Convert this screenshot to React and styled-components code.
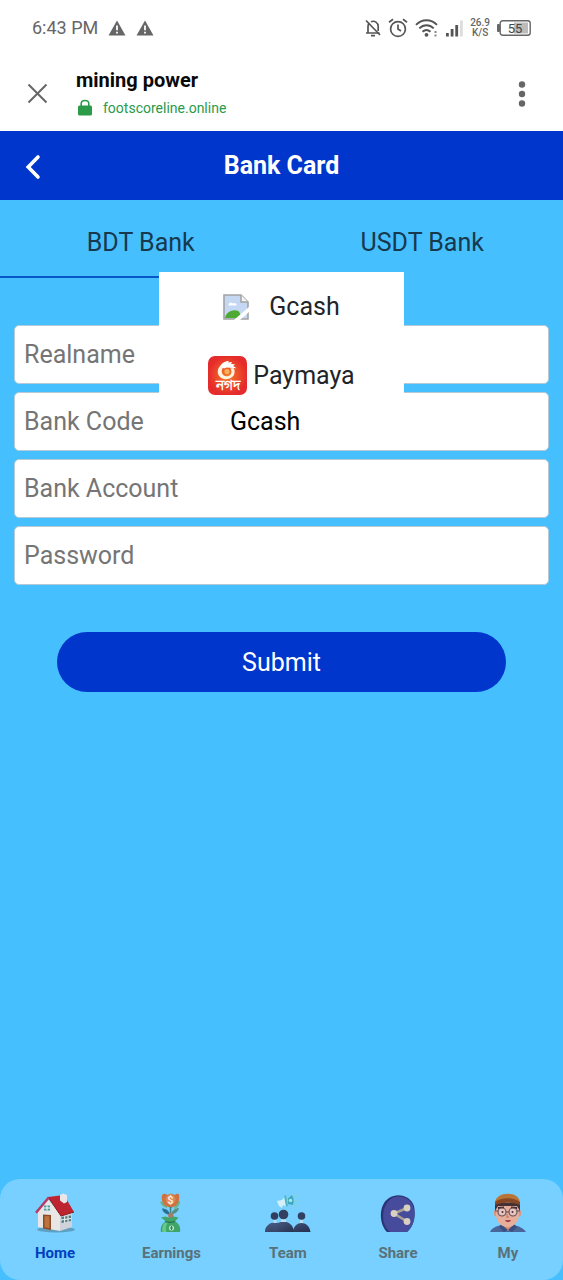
import React, { useState } from "react";
import styled, { createGlobalStyle } from "styled-components";

const GlobalStyle = createGlobalStyle`
  * {
    box-sizing: border-box;
  }

  body {
    margin: 0;
    background: #46bfff;
    font-family: Roboto, "Liberation Sans", sans-serif;
  }

  button,
  input {
    font-family: inherit;
  }

  button {
    border: 0;
    padding: 0;
    background: none;
    cursor: pointer;
  }

  svg {
    display: block;
    flex: none;
  }
`;

const Page = styled.div`
  display: flex;
  flex-direction: column;
  min-height: 100vh;
`;

const StatusBar = styled.div`
  display: flex;
  justify-content: space-between;
  align-items: center;
  height: 56px;
  padding: 0 32px;
  background: #fff;
  color: #666;
`;

const StatusGroup = styled.div`
  display: flex;
  align-items: center;
  gap: ${({ $gap }) => $gap}px;
`;

const Clock = styled.span`
  font-size: 18px;
  line-height: 20px;
`;

const NetSpeed = styled.span`
  font-size: 10px;
  font-weight: 500;
  line-height: 10px;
  text-align: center;
`;

const BrowserBar = styled.div`
  display: flex;
  align-items: center;
  height: 75px;
  padding: 0 32px 0 27px;
  background: #fff;
  color: #666;
`;

const SiteInfo = styled.div`
  flex: 1;
  margin-left: 28px;
`;

const SiteTitle = styled.div`
  color: #0a0a0a;
  font-size: 20px;
  font-weight: 700;
  line-height: 28px;
`;

const SiteUrl = styled.a`
  display: flex;
  align-items: center;
  gap: 11px;
  padding-left: 2px;
  color: #2b9a49;
  font-size: 14px;
  line-height: 28px;
  text-decoration: none;
`;

const Header = styled.header`
  display: grid;
  grid-template-columns: 64px 1fr 64px;
  align-items: center;
  height: 69px;
  background: #0036cc;
  color: #fff;

  & h1 {
    margin: 0;
    font-size: 25px;
    font-weight: 700;
    line-height: 32px;
    text-align: center;
  }
`;

const BackButton = styled.button`
  padding: 2px 0 0 25px;
  color: #fff;
`;

const Tabs = styled.div`
  display: grid;
  grid-template-columns: 1fr 1fr;
`;

const Tab = styled.button`
  height: 78px;
  padding-top: 8px;
  border-bottom: 2px solid ${({ $active }) => ($active ? "#0757c9" : "transparent")};
  color: #17384d;
  font-size: 25px;
`;

const Form = styled.form`
  display: flex;
  flex-direction: column;
  gap: 8px;
  padding: 47px 14px;
`;

const Field = styled.div`
  position: relative;
  display: flex;
  align-items: center;
  height: 59px;
  padding: 0 9px;
  border: 1px solid #b5c9d6;
  border-radius: 5px;
  background: #fff;
  color: #757575;
  font-size: 25px;

  & label {
    flex: 0 0 40%;
  }
`;

const TextInput = styled.input`
  width: 100%;
  min-width: 0;
  height: 56px;
  padding: 0;
  border: 0;
  outline: 0;
  background: none;
  color: #000;
  font-size: 25px;

  &::placeholder {
    color: #757575;
    opacity: 1;
  }
`;

const BankMenu = styled.div`
  position: absolute;
  bottom: 40px;
  left: 27%;
  width: 46%;
  background: #fff;
`;

const BankOption = styled.button`
  display: flex;
  justify-content: center;
  align-items: center;
  gap: ${({ $gap }) => $gap}px;
  width: 100%;
  height: 69px;
  color: #212529;
  font-size: 25px;
`;

const Submit = styled.button`
  align-self: center;
  width: 84%;
  height: 60px;
  margin-top: 39px;
  border-radius: 30px;
  background: #0036cc;
  color: #fff;
  font-size: 25px;
`;

const BottomNav = styled.nav`
  display: flex;
  justify-content: space-around;
  height: 101px;
  margin-top: auto;
  padding-top: 14px;
  border-radius: 20px;
  background: #77d0ff;
`;

const NavItem = styled.a`
  display: flex;
  flex-direction: column;
  align-items: center;
  gap: 10px;
  min-width: 46px;
  color: ${({ $active }) => ($active ? "#0040c0" : "#5a7078")};
  font-size: 15px;
  font-weight: 700;
  line-height: 20px;
  text-decoration: none;
`;

const WarningIcon = () => (
  <svg width="18" height="16" viewBox="0 0 18 16">
    <path d="M9 0.5 17.5 15.5H.5z" fill="#666" />
    <path d="M9 5.5v4.8M9 11.8v1.8" stroke="#fff" strokeWidth="1.8" />
  </svg>
);

const BellOffIcon = () => (
  <svg width="16" height="18" viewBox="0 0 16 18" fill="none" stroke="#555" strokeWidth="1.7">
    <path d="M1 14h13.5M3 14V7.500c0-1.500.5-2.700 1.400-3.500M6 2.800C9.600 1.200 13.200 3.600 13.200 7.500V12" />
    <path d="M1 1.500 15 16M6 16.700h4" />
  </svg>
);

const AlarmIcon = () => (
  <svg width="20" height="20" viewBox="0 0 20 20" fill="none" stroke="#555" strokeWidth="1.7">
    <circle cx="10" cy="11" r="7.4" />
    <path d="M10 6.500V11l3 2M1 4.200 5 1.200M19 4.200 15 1.200" />
  </svg>
);

const WifiIcon = () => (
  <svg width="24" height="20" viewBox="0 0 24 20" fill="none" stroke="#555" strokeWidth="1.9">
    <path d="M1 6.800C7 .700 16 .700 22 6.800M4.300 10.400c4.300-4.200 10.100-4.200 14.400 0M7.500 13.800c2.400-2.300 5.600-2.300 8 0" />
    <circle cx="11.5" cy="16.8" r="1.9" fill="#555" stroke="none" />
    <path d="M20.500 13v2M20.500 16.500v2" strokeWidth="2" stroke="#888" />
  </svg>
);

const SignalIcon = () => (
  <svg width="17" height="17" viewBox="0 0 17 17" fill="#555">
    <rect x="0" y="13" width="2.8" height="3.5" />
    <rect x="4.7" y="9" width="2.8" height="7.5" />
    <rect x="9.3" y="5" width="2.8" height="11.5" />
    <rect x="14" y="0.5" width="2.8" height="16" fill="#ddd" />
  </svg>
);

const BatteryIcon = () => (
  <svg width="34" height="18" viewBox="0 0 34 18">
    <rect x="0" y="5" width="3" height="8" rx="1" fill="#666" />
    <rect x="3.2" y="1.7" width="30" height="14.600" rx="2.5" fill="#fff" stroke="#666" strokeWidth="1.4" />
    <rect x="17" y="3.5" width="14" height="11" fill="#bbb" />
    <text x="18" y="14" fontSize="13" textAnchor="middle" fill="#444">55</text>
  </svg>
);

const CloseIcon = () => (
  <svg width="21" height="21" viewBox="0 0 21 21" stroke="#666" strokeWidth="2">
    <path d="M1.500 1.500 19.500 19.500M19.500 1.500 1.500 19.500" />
  </svg>
);

const LockIcon = () => (
  <svg width="14" height="17" viewBox="0 0 14 17">
    <path d="M3.200 7V4.700C3.200 .400 10.800 .400 10.800 4.700V7" fill="none" stroke="#2b9a49" strokeWidth="1.6" />
    <rect y="6.5" width="14" height="10" rx="1.5" fill="#2b9a49" />
  </svg>
);

const DotsIcon = () => (
  <svg width="18" height="28" viewBox="0 0 18 28" fill="#666">
    <circle cx="9" cy="4.500" r="3.2" />
    <circle cx="9" cy="14" r="3.2" />
    <circle cx="9" cy="23.500" r="3.2" />
  </svg>
);

const BackIcon = () => (
  <svg width="17" height="26" viewBox="0 0 17 26" fill="none" stroke="#fff" strokeWidth="3.6" strokeLinecap="round">
    <path d="M13 3 3.200 13 13 23" />
  </svg>
);

const BrokenImageIcon = () => (
  <svg width="26" height="26" viewBox="0 0 26 26">
    <path d="M1 1h17l7 7v17H1z" fill="#c5d8f3" stroke="#a3a3a3" strokeWidth="1.6" />
    <path d="M5.500 11.500c0-3 3-3.800 4-2 2-1.500 4.500 0 4 2z" fill="#fff" />
    <path d="M2 24c1-6.500 9-9.500 14-6.500l3 6.500z" fill="#4faa35" />
    <path d="M11 26 26 13v5l-9 8z" fill="#fff" />
    <path d="M18 1v7h7" fill="#f5f5f5" stroke="#a3a3a3" strokeWidth="1.5" />
  </svg>
);

const NagadIcon = () => (
  <svg width="39" height="39" viewBox="0 0 39 39">
    <defs>
      <radialGradient id="nagad">
        <stop offset="0" stopColor="#f57b28" />
        <stop offset="1" stopColor="#e52b2b" />
      </radialGradient>
    </defs>
    <rect width="39" height="39" rx="7" fill="url(#nagad)" />
    <path d="M12.500 9.500c-4 4-3.500 9.500.5 12.200 4.500 3 11.500 1.300 13.200-3.700.8-2.300.4-4.300-.7-6l-3.200.5c2 2.500 1.500 5.800-1.300 7.300-3 1.500-6.800-.3-7.200-3.800-.3-2.400.8-4.300 3-5.500z" fill="#fff4df" />
    <path d="M12.500 9.500c2-3 5-4.500 8.500-4.500l-1 1.500 4-.5-1 1.800 4 .7-1.800 1.500 3.300 2.300-10-.8-2.500 1z" fill="#fff" />
    <circle cx="19" cy="15.5" r="2.6" fill="#f9b05a" />
    <text x="19.5" y="33.5" fontSize="14" fontWeight="700" textAnchor="middle" fill="#fff">নগদ</text>
  </svg>
);

const HomeIcon = () => (
  <svg width="42" height="40" viewBox="0 0 42 40">
    <ellipse cx="22" cy="36.5" rx="19" ry="3" fill="#4f8199" opacity=".6" />
    <path d="M4 18 14 6l12 15v17L4 34z" fill="#e9e7e6" />
    <path d="m26 21 12-2v15l-12 4z" fill="#cfd2d8" />
    <path d="M14 4 30 2l10 17-13 4z" fill="#bd2430" />
    <path d="m14 4 13 19 13-4" fill="none" stroke="#8d1824" strokeWidth="1" />
    <path d="M1 19 14 3.500l1.500 2L3 20.500z" fill="#b43a68" />
    <path d="m26 2 3-1.500 4 1.500v7l-3 1.500-4-3z" fill="#e9e5e8" />
    <path d="M9 21.500 17 22v15l-8-1.500z" fill="#8b4c27" />
    <path d="m10.500 23 5 .3v12l-5-1z" fill="#bd733d" />
    <path d="M10 12.500h6v5h-6z" fill="#4c9c9f" />
    <path d="M13 12.500v5M10 15h6" stroke="#fff" strokeWidth="1" />
    <path d="m27.500 24 9.500-1.500v5.500l-9.500 2z" fill="#537b83" />
    <path d="M30.700 23v7M34 23v6M27 27l10-1.500" stroke="#f7f7f7" strokeWidth="1" />
  </svg>
);

const EarningsIcon = () => (
  <svg width="24" height="40" viewBox="0 0 24 40">
    <path d="M1 9c1 3 3 5 7 6V7zM21 8c0 4-2 7-6 8l1-8z" fill="#6db38b" />
    <path d="M3 2c2-2 4-1 5 0l4-1.500L16 2c2-2 4-1 4 0 1 5-1 9-4 11l-4 2-5-2C4 11 2 7 3 2z" fill="#cf7141" />
    <circle cx="11.5" cy="6.5" r="5" fill="#dd8858" />
    <text x="11.5" y="10.5" fontSize="11" fontWeight="700" textAnchor="middle" fill="#ffe8d7">$</text>
    <path d="M11.500 14v11" stroke="#3d7f80" strokeWidth="1.5" />
    <path d="M3 15.500c4 0 7 2 8 6-4 0-7-2-8-6z" fill="#286f91" />
    <path d="M20 15c-4 0-7 3-8 6 4 0 7-2 8-6z" fill="#568f80" />
    <path d="M9 21.500l2.500-2 3 2V25h-5z" fill="#a77b68" />
    <path d="M2 24.500l4.500-1 4 1.500 4-1.500 5 1-3.500 4c4 2 6 6 5 10.500H2c-1-4.500 1-8.500 5-10.500z" fill="#40a568" />
    <path d="M7 29c-4 3-4 6-3.500 10h4c-1-3-1-7 2-10z" fill="#65c98a" />
    <path d="M6 28.500c3 1 7 1 10 0" stroke="#25734f" strokeWidth="1.2" fill="none" />
    <circle cx="12.5" cy="35" r="2.6" fill="#b4e6c5" />
    <path d="M12.500 33v4M11 35h3" stroke="#2c8545" />
  </svg>
);

const TeamIcon = () => (
  <svg width="46" height="40" viewBox="0 0 46 40">
    <defs>
      <linearGradient id="suit" x1="0" y1="0" x2="1" y2="1">
        <stop offset="0" stopColor="#4c5f87" />
        <stop offset="1" stopColor="#25304f" />
      </linearGradient>
    </defs>
    <path d="M0 39c0-12 19-13 20 0zM28 39c1-12 16-12 17.500 0z" fill="url(#suit)" />
    <path d="M8 39c1-14 20-14 21 0z" fill="url(#suit)" />
    <path d="M16.500 26h4l1 3h-6zM8.500 27h3v3h-3zM35 27h3v3h-3z" fill="#b9deef" />
    <circle cx="9.5" cy="23" r="3.8" fill="#333f61" />
    <circle cx="18.5" cy="21.5" r="4.8" fill="#333f61" />
    <circle cx="36.5" cy="23" r="3.8" fill="#333f61" />
    <path d="m12 8 5-1 3-4 2 11-4-2-1 3-3-2z" fill="#d5eff8" />
    <path d="m19 3 2-1 2 11-2 1z" fill="#4fb7c9" />
    <path d="M23 5.500 27 2c2 3 2 7 1 10l-5-1z" fill="#3ea9be" />
    <circle cx="25.5" cy="7.5" r="1.8" fill="#a8e2e9" />
    <path d="m29 4 3-2M29.500 8h4M29 12l3 2" stroke="#83d4bd" strokeWidth="1.2" />
  </svg>
);

const ShareIcon = () => (
  <svg width="36" height="40" viewBox="0 0 36 40">
    <path d="M7 39C-2 30-1 11 9 5c9-6 22-2 25 8 2 10 0 20-7 26z" fill="#293575" />
    <path d="M10 39C0 31 1 12 12 5c9-4 18 0 21 8 3 10 1 20-6 26z" fill="#474b9b" />
    <path d="M27 15 14 20.500l13 8" fill="none" stroke="#aaa091" strokeWidth="2.6" />
    <circle cx="27" cy="15" r="3.4" fill="#d8d0c0" />
    <circle cx="14" cy="20.5" r="3.4" fill="#d8d0c0" />
    <circle cx="27" cy="28.5" r="3.4" fill="#d8d0c0" />
  </svg>
);

const ProfileIcon = () => (
  <svg width="36" height="40" viewBox="0 0 36 40">
    <path d="M0 39c2-4 6-6 12-7h11c6 1 10 3 13 7z" fill="#4a659a" />
    <path d="M12 28h11v6l-5 4-6-4z" fill="#d88d78" />
    <path d="m11 31 7 6-4 2-5-5zM24 31l-6 6 4 2 5-5z" fill="#384f80" />
    <ellipse cx="6" cy="20" rx="2" ry="3.500" fill="#dc947b" />
    <ellipse cx="29" cy="20" rx="2" ry="3.500" fill="#dc947b" />
    <path d="M6 10h23v11c0 8-5 13-11.500 13S6 29 6 21z" fill="#e8ae9c" />
    <path d="M5 10h25v8l-3-5H8l-3 5z" fill="#443136" />
    <path d="M5 11C4-2 31-3 30 11c-7-4-17-4-25 0z" fill="#b97438" />
    <path d="M5 9c6-5 19-5 25 0v3c-8-3-17-3-25 0z" fill="#884825" />
    <path d="M8 15l6-.5M21 14.500l6 .5" stroke="#3d2932" strokeWidth="1.8" />
    <circle cx="12" cy="19" r="4" fill="#eac5bd" stroke="#604c56" strokeWidth="1.1" />
    <circle cx="23" cy="19" r="4" fill="#eac5bd" stroke="#604c56" strokeWidth="1.1" />
    <path d="M16 19h3M5 18h3M27 18h3" stroke="#604c56" />
    <circle cx="12.5" cy="19" r="1" fill="#43343b" />
    <circle cx="22.5" cy="19" r="1" fill="#43343b" />
    <path d="M17 21v3h2" fill="none" stroke="#ca7c69" strokeWidth="1.3" />
    <path d="M15 27h6c-1 3-5 3-6 0z" fill="#a54348" />
  </svg>
);

const navItems = [
  { label: "Home", Icon: HomeIcon },
  { label: "Earnings", Icon: EarningsIcon },
  { label: "Team", Icon: TeamIcon },
  { label: "Share", Icon: ShareIcon },
  { label: "My", Icon: ProfileIcon },
];

const App = () => {
  const [tab, setTab] = useState("BDT Bank");
  const [bank, setBank] = useState("Gcash");

  return (
    <Page>
      <GlobalStyle />
      <StatusBar>
        <StatusGroup $gap={10}>
          <Clock>6:43 PM</Clock>
          <WarningIcon />
          <WarningIcon />
        </StatusGroup>
        <StatusGroup $gap={7}>
          <BellOffIcon />
          <AlarmIcon />
          <WifiIcon />
          <SignalIcon />
          <NetSpeed>26.9<br />K/S</NetSpeed>
          <BatteryIcon />
        </StatusGroup>
      </StatusBar>
      <BrowserBar>
        <button type="button" aria-label="Close"><CloseIcon /></button>
        <SiteInfo>
          <SiteTitle>mining power</SiteTitle>
          <SiteUrl href="#"><LockIcon />footscoreline.online</SiteUrl>
        </SiteInfo>
        <button type="button" aria-label="More"><DotsIcon /></button>
      </BrowserBar>
      <Header>
        <BackButton type="button" aria-label="Back"><BackIcon /></BackButton>
        <h1>Bank Card</h1>
      </Header>
      <Tabs role="tablist">
        {["BDT Bank", "USDT Bank"].map((name) => (
          <Tab
            key={name}
            type="button"
            role="tab"
            aria-selected={tab === name}
            $active={tab === name}
            onClick={() => setTab(name)}
          >
            {name}
          </Tab>
        ))}
      </Tabs>
      <Form onSubmit={(e) => e.preventDefault()}>
        <Field>
          <TextInput type="text" placeholder="Realname" aria-label="Realname" />
        </Field>
        <Field>
          <label htmlFor="bank-code">Bank Code</label>
          <TextInput id="bank-code" type="text" value={bank} readOnly />
          <BankMenu>
            <BankOption type="button" $gap={20} onClick={() => setBank("Gcash")}>
              <BrokenImageIcon />
              Gcash
            </BankOption>
            <BankOption type="button" $gap={6} onClick={() => setBank("Paymaya")}>
              <NagadIcon />
              Paymaya
            </BankOption>
          </BankMenu>
        </Field>
        <Field>
          <TextInput type="text" placeholder="Bank Account" aria-label="Bank Account" />
        </Field>
        <Field>
          <TextInput type="password" placeholder="Password" aria-label="Password" />
        </Field>
        <Submit type="submit">Submit</Submit>
      </Form>
      <BottomNav>
        {navItems.map(({ label, Icon }) => (
          <NavItem key={label} href="#" $active={label === "Home"}>
            <Icon />
            {label}
          </NavItem>
        ))}
      </BottomNav>
    </Page>
  );
};

export default App;
